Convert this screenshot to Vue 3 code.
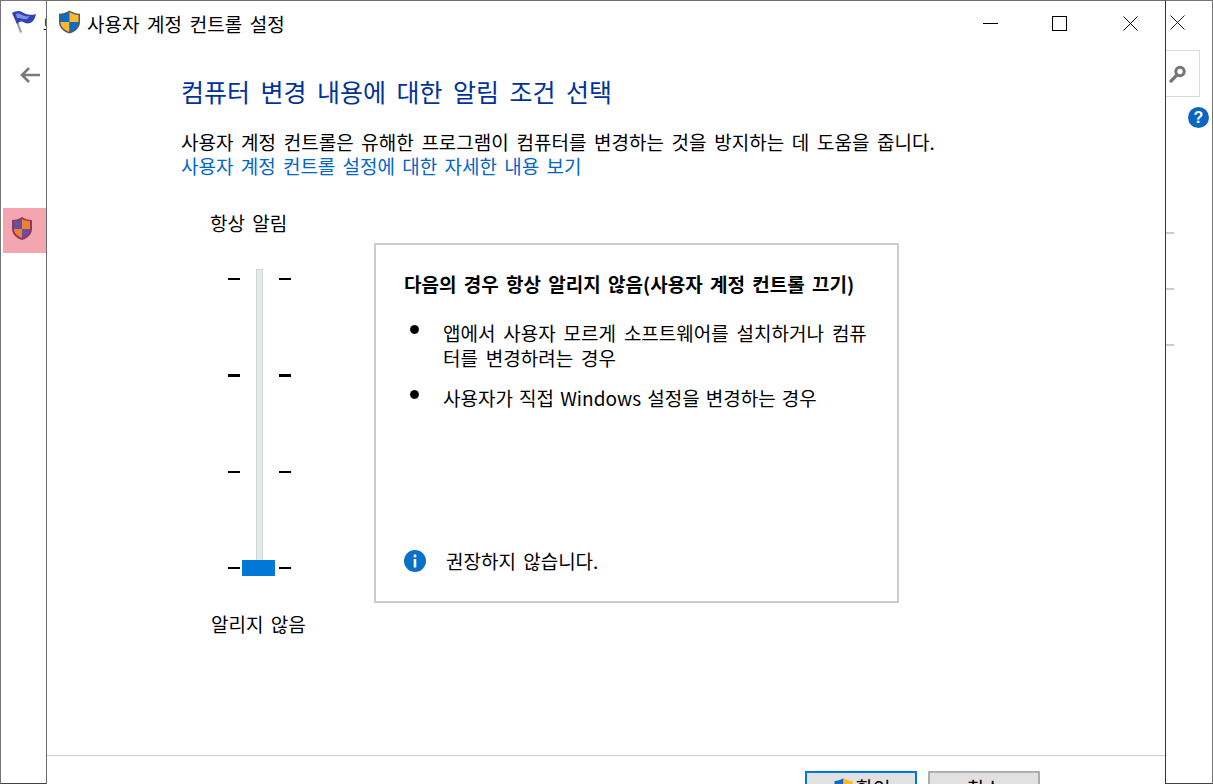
<script setup>
const ticks = [2, 3, 2, 2]
</script>

<template>
  <div class="desktop">
    <section class="back-window">
      <header class="back-title">
        <svg class="flag" width="26" height="24" viewBox="0 0 26 24">
          <path d="M9 23 2 4l2-1 7 19z" fill="#9aa0b0" />
          <path d="M1 3c3-2 7-3 10-1s8 4 14 2c-1 5-3 8-6 9-3 1-5 0-7-1-2-1-4 0-6 2z" fill="#3342b4" />
          <path d="M5 4c2-1 4 0 6 1 2 1 5 2 8 1l-3 3c-3 1-5-1-8-1H6z" fill="#8193e8" />
        </svg>
        <span class="back-name">보</span>
      </header>
      <svg class="back-arrow" width="20" height="16" viewBox="0 0 20 16">
        <path d="M9 1 2 8l7 7M2 8h18" fill="none" stroke="#7a7a7a" stroke-width="2.6" />
      </svg>
      <div class="side-highlight">
        <svg width="24" height="25" viewBox="0 0 24 25">
          <path d="M12 1c3 2 6 3 10 3v9c0 5-4 9-10 11C6 22 2 18 2 13V4c4 0 7-1 10-3z" fill="#93385f" />
          <path d="M12 3v10H4V5c3 0 6-1 8-2z" fill="#66509f" />
          <path d="M12 3c2 1 5 2 8 2v8h-8z" fill="#ef8131" />
          <path d="M4 13h8v9c-5-2-8-5-8-9z" fill="#ef8131" />
          <path d="M12 13h8c0 4-3 7-8 9z" fill="#66509f" />
        </svg>
      </div>
      <svg class="back-close" width="15" height="15" viewBox="0 0 15 15">
        <path d="M.5.5l14 14M14.5.5l-14 14" stroke="#222" fill="none" />
      </svg>
      <div class="search-box">
        <svg width="18" height="18" viewBox="0 0 18 18">
          <circle cx="11" cy="6.5" r="4.2" fill="none" stroke="#757575" stroke-width="3" />
          <path d="M8 10 2 16" stroke="#757575" stroke-width="3.2" stroke-linecap="round" />
        </svg>
      </div>
      <div class="help">?</div>
      <i class="mark m1"></i><i class="mark m2"></i><i class="mark m3"></i>
    </section>

    <section class="dialog">
      <header class="titlebar">
        <svg class="shield" width="23" height="24" viewBox="0 0 23 24">
          <path d="M11.5 .5c3 2 6 3 10.5 3.3V12c0 5.500-4 9.500-10.500 11.500C5 21.500 1 17.500 1 12V3.800C5.500 3.500 8.500 2.500 11.500 .5z" fill="#5a5a5a" />
          <path d="M11.500 2v10H2.500V5c3.500-.3 6.500-1.300 9-3z" fill="#0a6cc4" />
          <path d="M11.500 2c2.500 1.700 5.500 2.700 9 3v7h-9z" fill="#fdb92e" />
          <path d="M2.500 12h9v10c-5.500-1.800-9-5.500-9-10z" fill="#fdb92e" />
          <path d="M11.500 12h9c0 4.500-3.500 8.200-9 10z" fill="#0a6cc4" />
        </svg>
        <span class="title">사용자 계정 컨트롤 설정</span>
        <div class="controls">
          <svg width="15" height="15" viewBox="0 0 15 15"><path d="M0 7.500h15" stroke="#000" /></svg>
          <svg width="15" height="15" viewBox="0 0 15 15"><rect x=".5" y=".5" width="14" height="14" fill="none" stroke="#000" /></svg>
          <svg class="close" width="15" height="15" viewBox="0 0 15 15"><path d="M.5.5l14 14M14.500.5l-14 14" stroke="#000" fill="none" /></svg>
        </div>
      </header>

      <main class="content">
        <h1 class="heading">컴퓨터 변경 내용에 대한 알림 조건 선택</h1>
        <p class="intro">사용자 계정 컨트롤은 유해한 프로그램이 컴퓨터를 변경하는 것을 방지하는 데 도움을 줍니다.</p>
        <a class="link">사용자 계정 컨트롤 설정에 대한 자세한 내용 보기</a>

        <div class="settings">
          <div class="slider-col">
            <div class="slider-label">항상 알림</div>
            <div class="slider">
              <div class="tick-col">
                <i v-for="(h, n) in ticks" :key="n" class="tick" :class="'h' + h"></i>
              </div>
              <div class="track"></div>
              <div class="tick-col">
                <i v-for="(h, n) in ticks" :key="n" class="tick" :class="'h' + h"></i>
              </div>
              <div class="thumb"></div>
            </div>
            <div class="slider-label bottom">알리지 않음</div>
          </div>

          <div class="panel">
            <h2 class="panel-title">다음의 경우 항상 알리지 않음(사용자 계정 컨트롤 끄기)</h2>
            <ul class="items">
              <li>앱에서 사용자 모르게 소프트웨어를 설치하거나 컴퓨터를 변경하려는 경우</li>
              <li>사용자가 직접 Windows 설정을 변경하는 경우</li>
            </ul>
            <div class="note">
              <svg width="22" height="22" viewBox="0 0 22 22">
                <circle cx="11" cy="11" r="11" fill="#0a6fc9" />
                <rect x="9.700" y="9" width="2.600" height="8.500" fill="#fff" />
                <rect x="9.700" y="4.500" width="2.600" height="2.800" fill="#fff" />
              </svg>
              <span>권장하지 않습니다.</span>
            </div>
          </div>
        </div>
      </main>

      <footer class="footer">
        <button class="btn primary">
          <svg width="23" height="24" viewBox="0 0 23 24">
            <path d="M11.500 2v10H2.500V5c3.500-.3 6.500-1.300 9-3z" fill="#0a6cc4" />
            <path d="M11.500 2c2.500 1.700 5.500 2.700 9 3v7h-9z" fill="#fdb92e" />
            <path d="M2.500 12h9v10c-5.500-1.800-9-5.500-9-10z" fill="#fdb92e" />
            <path d="M11.500 12h9c0 4.500-3.500 8.200-9 10z" fill="#0a6cc4" />
          </svg>
          확인
        </button>
        <button class="btn">취소</button>
      </footer>
    </section>
  </div>
</template>

<style>
html, body { margin: 0; height: 100%; overflow: hidden; background: #fff; }
</style>

<style scoped>
.desktop {
  position: relative;
  width: 1213px;
  height: 784px;
  overflow: hidden;
  font-family: "Noto Sans CJK KR", "Noto Sans", sans-serif;
  color: #000;
}
.back-window {
  position: absolute;
  inset: 0;
  box-sizing: border-box;
  border: 1px solid #757575;
  border-bottom-color: #444;
  background: #fff;
}
.back-title { display: flex; align-items: center; width: 45px; height: 44px; padding-left: 10px; gap: 6px; box-sizing: border-box; overflow: hidden; }
.flag { margin-top: -2px; flex: none; }
.back-name { font-size: 15px; white-space: nowrap; }
.back-arrow { position: absolute; left: 19px; top: 66px; }
.side-highlight {
  position: absolute;
  left: 2px;
  top: 207px;
  width: 43px;
  height: 45px;
  background: #f4a6b0;
  display: flex;
  align-items: center;
  justify-content: center;
  padding: 0 5px 4px 0;
  box-sizing: border-box;
}
.back-close { position: absolute; left: 1169px; top: 14px; }
.search-box {
  position: absolute;
  left: 1150px;
  top: 49px;
  width: 49px;
  height: 47px;
  box-sizing: border-box;
  border: 1px solid #d9d9d9;
  display: flex;
  align-items: center;
  justify-content: flex-end;
  padding-right: 12px;
}
.help {
  position: absolute;
  left: 1187px;
  top: 106px;
  width: 21px;
  height: 21px;
  border-radius: 50%;
  background: #0a66c2;
  color: #fff;
  font: 700 16px/21px "Liberation Sans", sans-serif;
  text-align: center;
}
.mark { position: absolute; left: 1165px; width: 8px; height: 2px; background: #ccc; }
.m1 { top: 231px; }
.m2 { top: 287px; }
.m3 { top: 343px; }

.dialog {
  position: absolute;
  left: 46px;
  top: 0;
  width: 1120px;
  height: 820px;
  box-sizing: border-box;
  background: #fff;
  border: 1px solid #6e6e6e;
  border-right-color: #333;
  display: flex;
  flex-direction: column;
}
.titlebar { display: flex; align-items: center; height: 44px; padding-left: 11px; flex: none; }
.shield { margin-right: 6px; margin-top: -2px; }
.title { font-size: 19px; word-spacing: 3.400px; }
.controls {
  margin-left: auto;
  display: flex;
  gap: 54px;
  padding-right: 27px;
  margin-top: 1px;
}
.controls .close { margin-left: 2px; }
.content { flex: 1; padding: 24px 0 0 134px; }
.heading {
  margin: 0;
  font-size: 25px;
  line-height: 44px;
  height: 44px;
  font-weight: 400;
  color: #003399;
  word-spacing: 4.900px;
}
.intro, .link {
  display: block;
  margin: 0;
  font-size: 19px;
  line-height: 24px;
  word-spacing: 3.400px;
  white-space: nowrap;
}
.intro { margin-top: 17px; }
.link { color: #0066cc; word-spacing: 3px; }

.settings { display: flex; margin-top: 32px; }
.slider-col { width: 193px; flex: none; }
.slider-label { font-size: 19px; line-height: 25px; margin-left: 29px; word-spacing: 3px; white-space: nowrap; }
.slider {
  position: relative;
  margin: 34px 0 0 47px;
  width: 63px;
  height: 307px;
  display: flex;
  justify-content: space-between;
}
.slider-label.bottom { margin-top: 35px; margin-left: 30px; }
.tick-col {
  width: 12px;
  display: flex;
  flex-direction: column;
  justify-content: space-between;
  padding: 9px 0 7px;
  box-sizing: border-box;
}
.tick { display: block; height: 2px; background: #000; }
.tick.h3 { height: 3px; }
.track {
  width: 7px;
  box-sizing: border-box;
  background: #e7eaea;
  border: 1px solid #d6d6d6;
}
.thumb {
  position: absolute;
  left: 14px;
  bottom: 0;
  width: 33px;
  height: 16px;
  background: #0078d7;
}
.panel {
  flex: none;
  width: 525px;
  height: 360px;
  box-sizing: border-box;
  border: 2px solid #ccc;
  padding: 25px 28px 0;
  margin-top: 33px;
  display: flex;
  flex-direction: column;
}
.panel-title {
  margin: 0;
  font-size: 19px;
  line-height: 28px;
  font-weight: 700;
  word-spacing: 3px;
  white-space: nowrap;
}
.items { list-style: none; margin: 22px 0 0; padding: 0 0 0 39px; }
.items li {
  position: relative;
  font-size: 19px;
  line-height: 25px;
  word-spacing: 3.600px;
  margin-bottom: 15px;
  width: 430px;
  word-break: break-all;
}
.items li:last-child { word-spacing: 1.900px; }
.items li::before {
  content: "";
  position: absolute;
  left: -33px;
  top: 5px;
  width: 9px;
  height: 9px;
  border-radius: 50%;
  background: radial-gradient(circle, #000 55%, #777 100%);
}
.note {
  margin-top: auto;
  margin-bottom: 28px;
  display: flex;
  align-items: center;
  gap: 20px;
  font-size: 19px;
  line-height: 25px;
  word-spacing: 3px;
}

.footer {
  flex: none;
  height: 64px;
  box-sizing: border-box;
  border-top: 1px solid #ccc;
  display: flex;
  gap: 11px;
  padding: 15px 0 0 758px;
}
.btn {
  width: 112px;
  height: 40px;
  box-sizing: border-box;
  background: #e1e1e1;
  border: 2px solid #adadad;
  font: inherit;
  font-size: 19px;
  padding: 0 0 7px;
  display: flex;
  align-items: center;
  justify-content: center;
  gap: 1px;
}
.btn.primary { border-color: #0078d7; }
</style>
